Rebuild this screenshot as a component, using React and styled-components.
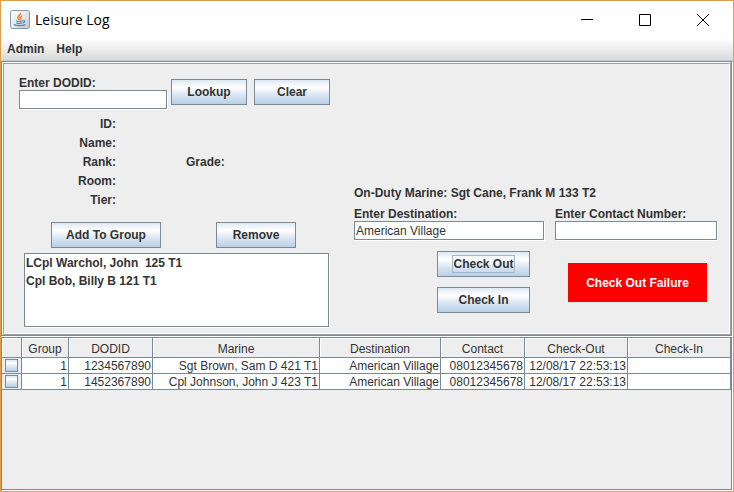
import React from "react";
import styled, { createGlobalStyle, css } from "styled-components";

const line = "#7a8a99";
const metal = "linear-gradient(#dde8f3 0%, #ffffff 30%, #dde8f3 60%, #b8cfe5 100%)";

const GlobalStyle = createGlobalStyle`
  * { box-sizing: border-box; }
  body {
    margin: 0;
    background: #eeeeee;
    color: #333333;
    font: 12px/14px "Liberation Sans", Arial, sans-serif;
  }
  button, input, select { font: inherit; color: inherit; margin: 0; border-radius: 0; }
`;

const Window = styled.div`
  min-height: 100vh;
  display: flex;
  flex-direction: column;
  border: 1px solid #dba04f;
  background: #eeeeee;
`;

const TitleBar = styled.header`
  display: flex;
  align-items: center;
  height: 37px;
  padding: 0 1px 0 9px;
  background: #ffffff;
  color: #000000;
`;

const Title = styled.h1`
  flex: 1;
  margin: 0 0 0 5px;
  font: 400 14px/20px "Open Sans", "Segoe UI", sans-serif;
`;

const WindowButton = styled.button`
  display: grid;
  place-items: center;
  width: 58px;
  height: 36px;
  padding: 0;
  border: 0;
  background: none;
`;

const MenuBar = styled.nav`
  display: flex;
  gap: 12px;
  height: 23px;
  padding: 0 6px;
  border-bottom: 1px solid #cccccc;
  background: linear-gradient(#ffffff, #dadada);
`;

const MenuButton = styled.button`
  padding: 0;
  border: 0;
  background: none;
  font-weight: 700;
`;

const Bevel = styled.div`
  padding: 0 1px 1px 0;
  border: 1px solid;
  border-color: ${line} #ffffff #ffffff ${line};
  background: ${line};
`;

const Etched = styled.div`
  border: 1px solid;
  border-color: #ffffff #a0a0a0 #a0a0a0 #ffffff;
`;

const Form = styled.form`
  display: flex;
  border: 1px solid;
  border-color: #a0a0a0 #ffffff #ffffff #a0a0a0;
  background: #eeeeee;
  font-weight: 700;
`;

const LookupColumn = styled.section`
  flex: none;
  width: 350px;
  padding: 12px 20px 6px 15px;
`;

const DutyColumn = styled.section`
  flex: 1;
  display: flex;
  flex-direction: column;
  justify-content: flex-end;
  padding: 0 12px 20px 0;
`;

const LookupRow = styled.div`
  display: flex;
  gap: 4px;
`;

const LookupButtons = styled.div`
  display: flex;
  gap: 7px;
  padding-top: 3px;
`;

const Field = styled.label`
  display: flex;
  flex-direction: column;
  flex: none;
  width: ${(p) => p.$width || "auto"};
`;

const TextBox = styled.input`
  width: 100%;
  height: 19px;
  padding: 1px 1px 0;
  border: 1px solid ${line};
  background: #ffffff;
  box-shadow: 1px 1px 0 #ffffff;
  font-weight: 400;
  outline: 0;
`;

const MetalButton = styled.button`
  width: ${(p) => p.$width};
  height: 26px;
  padding: 0;
  border: 1px solid ${line};
  background: ${metal};
  font-weight: 700;
  white-space: nowrap;
`;

const FocusText = styled.span`
  display: inline-block;
  line-height: 16px;
  outline: 1px solid #a3b8cc;
`;

const Details = styled.dl`
  display: grid;
  grid-template-columns: 97px 70px auto;
  grid-auto-rows: 19px;
  align-items: center;
  margin: 5px 0 13px;
`;

const Term = styled.dt`
  ${(p) =>
    p.$second
      ? css`grid-column: 3;`
      : css`
          grid-column: 1;
          text-align: right;
        `}
`;

const GroupButtons = styled.div`
  display: flex;
  gap: 55px;
  padding-left: 32px;
`;

const GroupList = styled.select`
  display: block;
  width: 305px;
  height: 74px;
  margin: 5px 0 0 5px;
  padding: 0;
  overflow: hidden;
  border: 1px solid ${line};
  background: #ffffff;
  box-shadow: 1px 1px 0 #ffffff;
  outline: 0;
`;

const GroupMember = styled.option`
  min-height: 18px;
  padding: 2px 1px;
  font-weight: 700;
`;

const OnDuty = styled.p`
  margin: 0 0 7px;
`;

const TripFields = styled.div`
  display: grid;
  grid-template-columns: 190fr 162fr;
  gap: 11px;
`;

const Actions = styled.div`
  display: flex;
  align-items: center;
  justify-content: center;
  gap: 38px;
  margin-top: 11px;
  padding-left: 73px;
`;

const ButtonStack = styled.div`
  display: flex;
  flex-direction: column;
  gap: 10px;
`;

const Failure = styled.output`
  padding: 13px 0 12px;
  width: 139px;
  background: #ff0000;
  color: #ffffff;
  text-align: center;
`;

const LogPane = styled(Bevel)`
  flex: 1;
  display: flex;
`;

const LogView = styled.section`
  flex: 1;
  background: #eeeeee;
`;

const LogTable = styled.table`
  width: 100%;
  table-layout: fixed;
  border-collapse: separate;
  border-spacing: 0;
`;

const Column = styled.col`
  width: ${(p) => p.$width};
`;

const Heading = styled.th`
  height: 20px;
  padding: 3px 0 0;
  border: solid ${line};
  border-width: 0 1px 1px 0;
  box-shadow: inset 1px 1px 0 #ffffff;
  font-weight: 400;
`;

const Cell = styled.td`
  height: 16px;
  padding: 1px 1px 0 0;
  overflow: hidden;
  border: solid ${line};
  border-width: 0 1px 1px 0;
  background: #ffffff;
  text-align: right;
  white-space: nowrap;
`;

const PickCell = styled(Cell)`
  background: #eeeeee;
  text-align: left;
  vertical-align: top;
  padding: 1px 0 0 3px;
`;

const Check = styled.input`
  appearance: none;
  display: block;
  width: 13px;
  height: 13px;
  border: 1px solid ${line};
  background: ${metal};
`;

function JavaIcon() {
  return (
    <svg width="20" height="20" viewBox="0 0 20 20" aria-hidden="true">
      <defs>
        <linearGradient id="tile" x1="0" y1="0" x2="1" y2="1">
          <stop offset="0" stopColor="#ffffff" />
          <stop offset="0.5" stopColor="#e4e8ed" />
          <stop offset="1" stopColor="#bcc9d5" />
        </linearGradient>
      </defs>
      <rect x="0.5" y="0.5" width="19" height="18" rx="2" fill="url(#tile)" stroke="#8498ab" />
      <path d="M10.5 3c.6 2-3.2 2.8-2.6 5 .2.8 1 1.3 1.3 2" fill="none" stroke="#e8893b" strokeWidth="1.6" />
      <path d="M12.2 5.8c-1.6.7-2.5 1.6-1.5 2.7.5.6 0 1.2-.5 1.6" fill="none" stroke="#e06b2c" strokeWidth="1.2" />
      <path d="M6 10.8c1.5.6 5.5.5 7 0M6.2 12.8c1.5.7 4.8.7 6.3 0M13.2 10.6c2-.4 2 1.8-.2 2.3" fill="none" stroke="#5481a6" strokeWidth="1.2" />
      <path d="M4 14.5c1.8 1.6 9.4 1.6 11.5 0" fill="none" stroke="#5481a6" strokeWidth="1.3" />
    </svg>
  );
}

const rows = [
  ["1", "1234567890", "Sgt Brown, Sam D 421 T1", "American Village", "08012345678", "12/08/17 22:53:13", ""],
  ["1", "1452367890", "Cpl Johnson, John J 423 T1", "American Village", "08012345678", "12/08/17 22:53:13", ""],
];
const headings = ["", "Group", "DODID", "Marine", "Destination", "Contact", "Check-Out", "Check-In"];
const widths = ["20px", "47px", "84px", "167px", "121px", "84px", "103px", "auto"];

export default function App() {
  return (
    <>
      <GlobalStyle />
      <Window>
        <TitleBar>
          <JavaIcon />
          <Title>Leisure Log</Title>
          <WindowButton aria-label="Minimize">
            <svg width="12" height="12"><path d="M0 5.5h12" stroke="#000" /></svg>
          </WindowButton>
          <WindowButton aria-label="Maximize">
            <svg width="12" height="12"><path d="M.5.5h11v11h-11z" fill="none" stroke="#000" /></svg>
          </WindowButton>
          <WindowButton aria-label="Close">
            <svg width="12" height="12"><path d="M0 0l12 12M12 0L0 12" stroke="#000" /></svg>
          </WindowButton>
        </TitleBar>
        <MenuBar>
          <MenuButton>Admin</MenuButton>
          <MenuButton>Help</MenuButton>
        </MenuBar>
        <Bevel>
          <Etched>
            <Form onSubmit={(e) => e.preventDefault()}>
              <LookupColumn>
                <LookupRow>
                  <Field $width="148px">
                    Enter DODID:
                    <TextBox />
                  </Field>
                  <LookupButtons>
                    <MetalButton $width="76px">Lookup</MetalButton>
                    <MetalButton $width="76px">Clear</MetalButton>
                  </LookupButtons>
                </LookupRow>
                <Details>
                  <Term>ID:</Term>
                  <Term>Name:</Term>
                  <Term>Rank:</Term>
                  <Term $second>Grade:</Term>
                  <Term>Room:</Term>
                  <Term>Tier:</Term>
                </Details>
                <GroupButtons>
                  <MetalButton $width="110px">Add To Group</MetalButton>
                  <MetalButton $width="80px">Remove</MetalButton>
                </GroupButtons>
                <GroupList size={4} aria-label="Group">
                  <GroupMember>{"LCpl Warchol, John\u00a0 125 T1"}</GroupMember>
                  <GroupMember>Cpl Bob, Billy B 121 T1</GroupMember>
                </GroupList>
              </LookupColumn>
              <DutyColumn>
                <OnDuty>On-Duty Marine: Sgt Cane, Frank M 133 T2</OnDuty>
                <TripFields>
                  <Field>
                    Enter Destination:
                    <TextBox defaultValue="American Village" />
                  </Field>
                  <Field>
                    Enter Contact Number:
                    <TextBox />
                  </Field>
                </TripFields>
                <Actions>
                  <ButtonStack>
                    <MetalButton $width="93px"><FocusText>Check Out</FocusText></MetalButton>
                    <MetalButton $width="93px">Check In</MetalButton>
                  </ButtonStack>
                  <Failure>Check Out Failure</Failure>
                </Actions>
              </DutyColumn>
            </Form>
          </Etched>
        </Bevel>
        <LogPane>
          <LogView>
            <LogTable>
              <colgroup>
                {widths.map((w, i) => <Column key={i} $width={w} />)}
              </colgroup>
              <thead>
                <tr>{headings.map((h, i) => <Heading key={i}>{h}</Heading>)}</tr>
              </thead>
              <tbody>
                {rows.map((row) => (
                  <tr key={row[1]}>
                    <PickCell><Check type="checkbox" aria-label={`Select ${row[2]}`} /></PickCell>
                    {row.map((value, i) => <Cell key={i}>{value}</Cell>)}
                  </tr>
                ))}
              </tbody>
            </LogTable>
          </LogView>
        </LogPane>
      </Window>
    </>
  );
}
